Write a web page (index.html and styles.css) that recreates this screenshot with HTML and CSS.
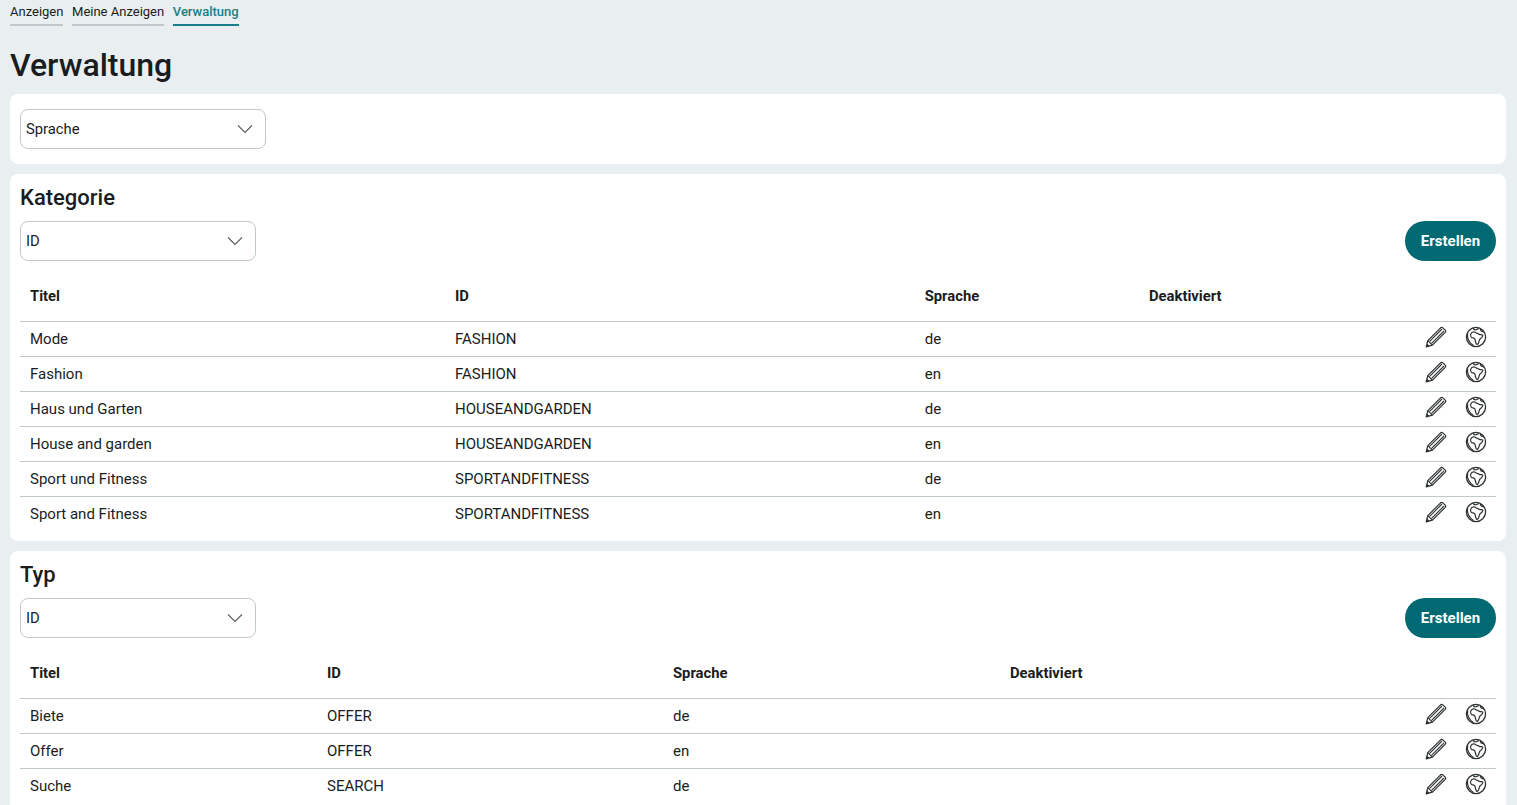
FILE: index.html
```html
<!DOCTYPE html>
<html lang="de">
<head>
    <meta charset="UTF-8">
    <meta name="viewport" content="width=device-width, initial-scale=1.0">
    <title>Verwaltung</title>
    <link rel="stylesheet" href="styles.css">
</head>
<body>
    <svg class="sprites" width="0" height="0">
        <symbol id="pencil" viewBox="0 0 22 22">
            <path d="M1.2 20.8l1.6-6.2L15.6 1.8a1.6 1.6 0 0 1 2.2 0l2.4 2.4a1.6 1.6 0 0 1 0 2.2L7.4 19.2z" fill="none" stroke="currentColor" stroke-width="1.2" stroke-linejoin="round"/>
            <path d="M2.8 14.6l4.6 4.6M4.6 15.4L17 3M6.6 17.4L19 5" fill="none" stroke="currentColor" stroke-width="1.1"/>
            <path d="M1.2 20.8l.8-3.4 2.6 2.6z" fill="currentColor"/>
        </symbol>
        <symbol id="globe" viewBox="0 0 22 22">
            <circle cx="11" cy="11" r="9.6" fill="none" stroke="currentColor" stroke-width="1.3"/>
            <path d="M2.6 7.4C2 11 3.6 16 8.4 19.6" fill="none" stroke="currentColor" stroke-width="1.2"/>
            <path d="M5.6 8.4c.6-1.6 2.4-2.8 4-2.4 1.2.3 1.6 1.4 2.8 1.4 1 0 1.4 1 2.4 1.2 1 .2 2.6-.2 3 .6.4 1-1.2 2.4-2.6 3.6-1 .9-1 2.2-1.4 3.4-.4 1.2-1.2 2.4-2 2.2-.8-.2-1-2-1.4-3.4-.3-1-.2-2-1-2.6-.9-.7-2.2-.2-3-1-.6-.6-.9-1.9-.8-3z" fill="none" stroke="currentColor" stroke-width="1.2" stroke-linejoin="round"/>
            <path d="M8 2c.4 1.2 1.6 2 2.8 1.8 1-.2 1.8-1 3-1.2M15.4 3c-.2 1.4.8 2.4 2 2.4.8 0 1.2.4 1.4 1" fill="none" stroke="currentColor" stroke-width="1.1"/>
        </symbol>
    </svg>

    <nav class="tabs">
        <a class="tab">Anzeigen</a>
        <a class="tab">Meine Anzeigen</a>
        <a class="tab active">Verwaltung</a>
    </nav>

    <h1>Verwaltung</h1>

    <section class="card card-filter">
        <div class="select select-lang">
            <span>Sprache</span>
            <svg class="chevron" viewBox="0 0 16 10"><path d="M1 1.5l7 7 7-7" fill="none" stroke="currentColor" stroke-width="1.1"/></svg>
        </div>
    </section>

    <section class="card">
        <h2>Kategorie</h2>
        <div class="toolbar">
            <div class="select">
                <span>ID</span>
                <svg class="chevron" viewBox="0 0 16 10"><path d="M1 1.5l7 7 7-7" fill="none" stroke="currentColor" stroke-width="1.1"/></svg>
            </div>
            <button class="btn">Erstellen</button>
        </div>
        <table class="table table-category">
            <thead>
                <tr><th class="col-title">Titel</th><th class="col-id">ID</th><th class="col-lang">Sprache</th><th>Deaktiviert</th><th class="col-actions"></th></tr>
            </thead>
            <tbody>
                <tr><td>Mode</td><td>FASHION</td><td>de</td><td></td><td class="actions"><svg class="icon"><use href="#pencil"/></svg><svg class="icon"><use href="#globe"/></svg></td></tr>
                <tr><td>Fashion</td><td>FASHION</td><td>en</td><td></td><td class="actions"><svg class="icon"><use href="#pencil"/></svg><svg class="icon"><use href="#globe"/></svg></td></tr>
                <tr><td>Haus und Garten</td><td>HOUSEANDGARDEN</td><td>de</td><td></td><td class="actions"><svg class="icon"><use href="#pencil"/></svg><svg class="icon"><use href="#globe"/></svg></td></tr>
                <tr><td>House and garden</td><td>HOUSEANDGARDEN</td><td>en</td><td></td><td class="actions"><svg class="icon"><use href="#pencil"/></svg><svg class="icon"><use href="#globe"/></svg></td></tr>
                <tr><td>Sport und Fitness</td><td>SPORTANDFITNESS</td><td>de</td><td></td><td class="actions"><svg class="icon"><use href="#pencil"/></svg><svg class="icon"><use href="#globe"/></svg></td></tr>
                <tr><td>Sport and Fitness</td><td>SPORTANDFITNESS</td><td>en</td><td></td><td class="actions"><svg class="icon"><use href="#pencil"/></svg><svg class="icon"><use href="#globe"/></svg></td></tr>
            </tbody>
        </table>
    </section>

    <section class="card">
        <h2>Typ</h2>
        <div class="toolbar">
            <div class="select">
                <span>ID</span>
                <svg class="chevron" viewBox="0 0 16 10"><path d="M1 1.5l7 7 7-7" fill="none" stroke="currentColor" stroke-width="1.1"/></svg>
            </div>
            <button class="btn">Erstellen</button>
        </div>
        <table class="table table-type">
            <thead>
                <tr><th class="col-title">Titel</th><th class="col-id">ID</th><th class="col-lang">Sprache</th><th>Deaktiviert</th><th class="col-actions"></th></tr>
            </thead>
            <tbody>
                <tr><td>Biete</td><td>OFFER</td><td>de</td><td></td><td class="actions"><svg class="icon"><use href="#pencil"/></svg><svg class="icon"><use href="#globe"/></svg></td></tr>
                <tr><td>Offer</td><td>OFFER</td><td>en</td><td></td><td class="actions"><svg class="icon"><use href="#pencil"/></svg><svg class="icon"><use href="#globe"/></svg></td></tr>
                <tr><td>Suche</td><td>SEARCH</td><td>de</td><td></td><td class="actions"><svg class="icon"><use href="#pencil"/></svg><svg class="icon"><use href="#globe"/></svg></td></tr>
            </tbody>
        </table>
    </section>
</body>
</html>
```

FILE: styles.css
```css
html {
    height: 100%;
    overflow: hidden;
}

body {
    font-family: Roboto, sans-serif;
    margin: 0;
    padding: 0 11px 0 10px;
    background: #e9eef1;
    color: #1a1c1e;
}

.sprites {
    position: absolute;
}

.tabs {
    display: flex;
    gap: 8.6px;
    height: 26px;
}

.tab {
    font-size: 13px;
    line-height: 24px;
    height: 24px;
    border-bottom: 2px solid #bfc8ca;
}

.tab.active {
    color: #17808a;
    font-weight: 500;
    border-bottom-color: #17808a;
}

h1 {
    font-size: 32px;
    line-height: 38px;
    font-weight: 500;
    margin: 20px 0 10px;
}

h2 {
    font-size: 22px;
    line-height: 26px;
    font-weight: 500;
    margin: 0 0 10px;
}

.card {
    background: white;
    border-radius: 8px;
    padding: 11px 10px 10px;
    margin-bottom: 10px;
}

.card-filter {
    padding: 15px 10px;
}

.select {
    display: flex;
    align-items: center;
    justify-content: space-between;
    box-sizing: border-box;
    width: 236px;
    height: 40px;
    padding: 0 12px 0 5px;
    border: 1px solid #bfc8ca;
    border-radius: 8px;
    font-size: 14.8px;
}

.select-lang {
    width: 246px;
}

.chevron {
    width: 16px;
    height: 10px;
    color: #5a5f62;
}

.toolbar {
    display: flex;
    justify-content: space-between;
    align-items: center;
}

.btn {
    width: 91px;
    height: 40px;
    border: none;
    border-radius: 20px;
    background: #006971;
    color: white;
    font-family: inherit;
    font-size: 15px;
    font-weight: 700;
    cursor: pointer;
}

.table {
    width: 100%;
    border-collapse: collapse;
    table-layout: fixed;
    font-size: 15px;
}

.table th {
    height: 60px;
    padding: 10px 10px 0;
    text-align: left;
    font-weight: 700;
    font-size: 14.8px;
    border-bottom: 1px solid #bfc8ca;
    box-sizing: border-box;
}

.table td {
    height: 35px;
    padding: 1px 10px 0;
    box-sizing: border-box;
    border-bottom: 1px solid #bfc8ca;
}

.table tbody tr:last-child td {
    border-bottom: none;
}

.table-category .col-title { width: 425px; }
.table-category .col-id { width: 469.7px; }
.table-category .col-lang { width: 224.3px; }

.table-type .col-title { width: 297px; }
.table-type .col-id { width: 346px; }
.table-type .col-lang { width: 337px; }

.col-actions {
    width: 140px;
}

.actions {
    text-align: right;
    white-space: nowrap;
    font-size: 0;
}

.icon {
    width: 22px;
    height: 22px;
    margin-left: 18px;
    color: #2e3133;
    vertical-align: middle;
    position: relative;
    top: -2px;
    right: -1px;
}
```
